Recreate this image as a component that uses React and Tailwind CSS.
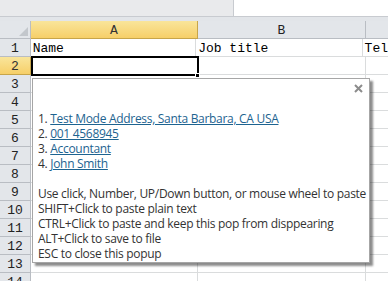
import React from "react";

const rows = Array.from({ length: 14 }, (_, i) => i + 1);

export default function App() {
  return (
    <div className="relative w-[388px] h-[281px] overflow-hidden bg-white" style={{ fontFamily: "'Liberation Mono', monospace" }}>
      {/* top bar */}
      <div className="flex h-[17px] border-b border-[#c8cbd0]">
        <div className="w-[234px] bg-[#e9eaec] border-r border-[#c8cbd0]" />
        <div className="flex-1 bg-white" />
      </div>
      <div className="h-[4px] bg-[#e2e5e9]" />
      {/* column header */}
      <div className="flex h-[18px]">
        <div className="w-[31px] bg-[#e3e6ea] border-r border-b border-[#b9bdc3] relative">
          <div className="absolute right-[2px] bottom-[2px] w-0 h-0 border-l-[9px] border-l-transparent border-b-[9px] border-b-[#c3c7cc]" />
        </div>
        <div className="w-[167px] bg-gradient-to-b from-[#f9e59a] to-[#f6cf68] border-r border-b border-[#c7a54a] flex items-end justify-center leading-[15px] text-[13px] text-[#333]">A</div>
        <div className="w-[168px] bg-[#e3e6ea] border-r border-b border-[#b9bdc3] flex items-end justify-center leading-[15px] text-[13px] text-[#222]">B</div>
        <div className="flex-1 bg-[#e3e6ea] border-b border-[#b9bdc3]" />
      </div>
      {rows.map((r) => (
        <div key={r} className="flex h-[18px] leading-[15px]">
          <div className={`w-[31px] border-r border-b flex items-end justify-center text-[13px] ${r === 2 ? "bg-gradient-to-b from-[#f9e59a] to-[#f6cf68] border-[#c7a54a] text-[#333]" : "bg-[#e3e6ea] border-[#b9bdc3] text-[#222]"}`}>{r}</div>
          <div className="w-[167px] border-r border-b border-[#dadcdd] flex items-end pl-[2px] text-[13px] text-black">{r === 1 ? "Name" : ""}</div>
          <div className="w-[168px] border-r border-b border-[#dadcdd] flex items-end pl-[2px] text-[13px] text-black">{r === 1 ? "Job title" : ""}</div>
          <div className="flex-1 border-b border-[#dadcdd] flex items-end pl-[2px] text-[13px] text-black whitespace-nowrap">{r === 1 ? "Tel" : ""}</div>
        </div>
      ))}
      {/* selection */}
      <div className="absolute left-[31px] top-[56px] w-[168px] h-[20px] border-2 border-black" />
      <div className="absolute left-[195px] top-[73px] w-[5px] h-[5px] bg-black border border-white" />

      {/* popup */}
      <div
        className="absolute left-[32px] top-[78px] w-[338px] h-[185px] bg-white border border-[#a6a6a6] shadow-[3px_3px_2px_rgba(0,0,0,0.45)] pl-[5px] pt-[32px] text-[12px] tracking-[-0.3px] text-[#333]"
        style={{ fontFamily: "'Open Sans', sans-serif" }}
      >
        <svg className="absolute left-[321px] top-[5px]" width="9" height="9" viewBox="0 0 9 9">
          <path d="M1 1L8 8M8 1L1 8" stroke="#8c8c8c" strokeWidth="2" />
        </svg>
        <div className="leading-[15px]">
          <div>1. <span className="text-[#1d6390] underline">Test Mode Address, Santa Barbara, CA USA</span></div>
          <div>2. <span className="text-[#1d6390] underline">001 4568945</span></div>
          <div>3. <span className="text-[#1d6390] underline">Accountant</span></div>
          <div>4. <span className="text-[#1d6390] underline">John Smith</span></div>
        </div>
        <div className="mt-[15px] leading-[15px] whitespace-nowrap">
          <div>Use click, Number, UP/Down button, or mouse wheel to paste</div>
          <div>SHIFT+Click to paste plain text</div>
          <div>CTRL+Click to paste and keep this pop from disppearing</div>
          <div>ALT+Click to save to file</div>
          <div>ESC to close this popup</div>
        </div>
      </div>
    </div>
  );
}
